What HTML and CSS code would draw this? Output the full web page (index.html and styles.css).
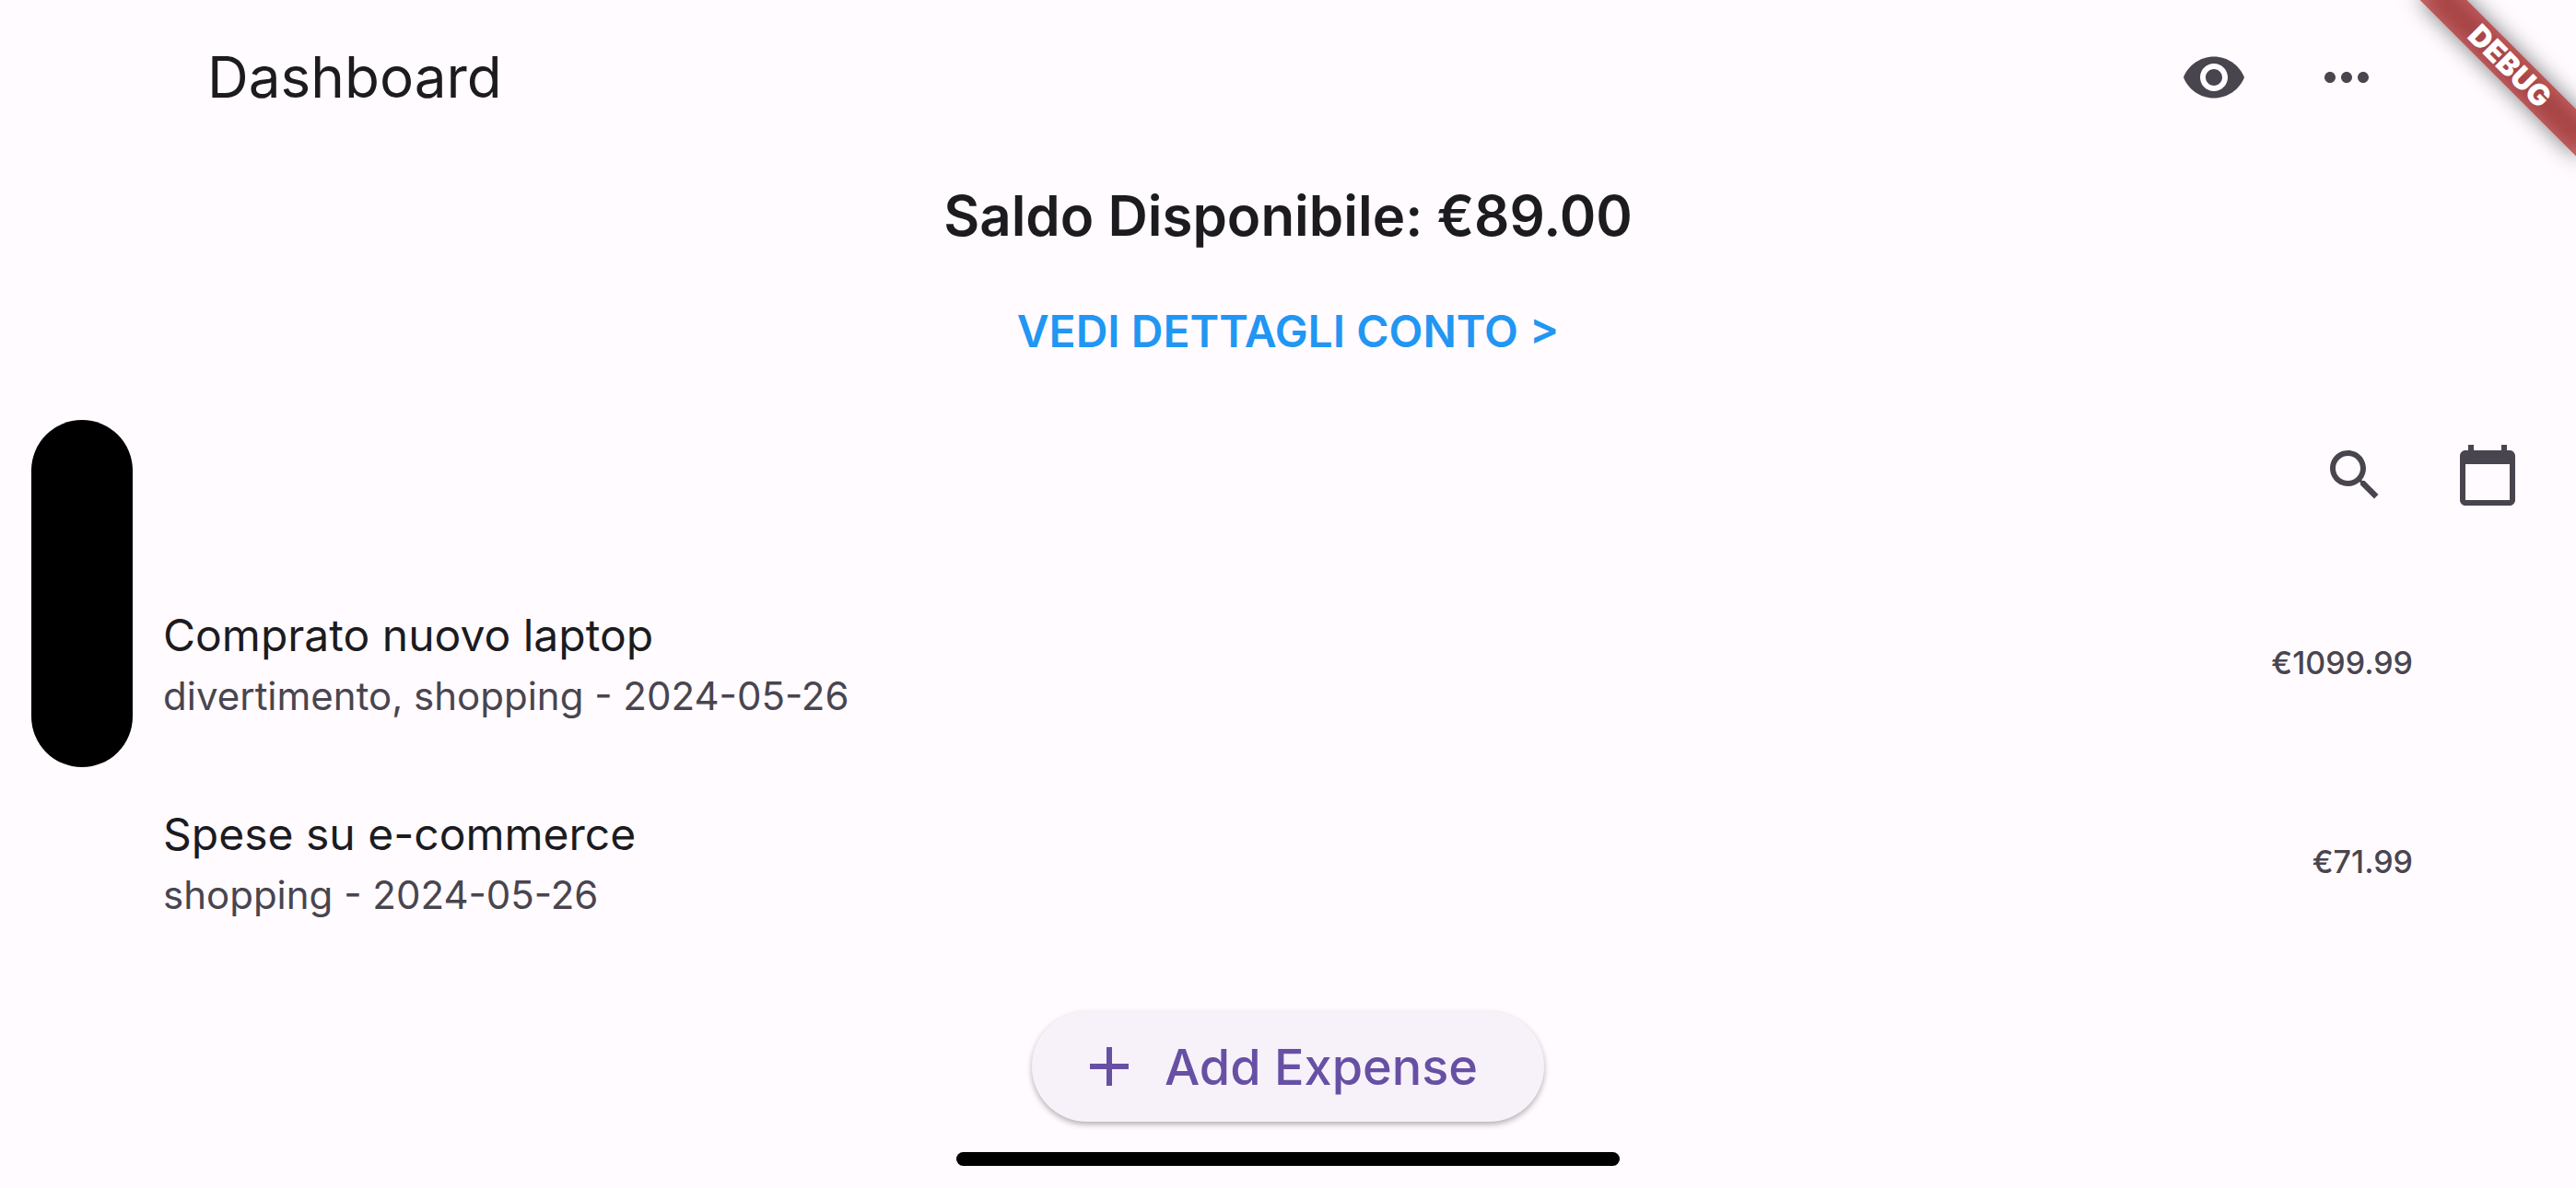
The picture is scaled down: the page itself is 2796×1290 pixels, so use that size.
FILE: index.html
```html
<!DOCTYPE html>
<html lang="it">
<head>
<meta charset="utf-8">
<meta name="viewport" content="width=device-width, initial-scale=1">
<title>Dashboard</title>
<link rel="stylesheet" href="styles.css">
</head>
<body>
<div class="screen">
  <header class="app-bar">
    <h1 class="app-title">Dashboard</h1>
    <button class="icon-button" type="button" aria-label="Mostra saldo">
      <svg class="icon" viewBox="0 0 24 24"><path d="M12 4.500C7 4.500 2.730 7.610 1 12c1.730 4.390 6 7.500 11 7.500s9.270-3.110 11-7.500c-1.730-4.390-6-7.500-11-7.500zM12 17c-2.760 0-5-2.240-5-5s2.240-5 5-5 5 2.240 5 5-2.240 5-5 5zm0-8c-1.660 0-3 1.340-3 3s1.340 3 3 3 3-1.340 3-3-1.340-3-3-3z"/></svg>
    </button>
    <button class="icon-button" type="button" aria-label="Altro">
      <svg class="icon" viewBox="0 0 24 24"><path d="M6 10c-1.100 0-2 .9-2 2s.9 2 2 2 2-.9 2-2-.9-2-2-2zm12 0c-1.100 0-2 .9-2 2s.9 2 2 2 2-.9 2-2-.9-2-2-2zm-6 0c-1.100 0-2 .9-2 2s.9 2 2 2 2-.9 2-2-.9-2-2-2z"/></svg>
    </button>
  </header>

  <main class="content">
    <section class="summary">
      <h2 class="balance">Saldo Disponibile: €89.00</h2>
      <a class="details-link" href="#conto">VEDI DETTAGLI CONTO &gt;</a>
    </section>

    <div class="filters">
      <button class="icon-button" type="button" aria-label="Cerca">
        <svg class="icon" viewBox="0 0 24 24"><path d="M15.500 14h-.79l-.28-.27C15.410 12.590 16 11.110 16 9.500 16 5.910 13.090 3 9.500 3S3 5.910 3 9.500 5.910 16 9.500 16c1.610 0 3.090-.59 4.230-1.570l.27.28v.79l5 4.990L20.490 19l-4.990-5zm-6 0C7.010 14 5 11.990 5 9.500S7.010 5 9.500 5 14 7.010 14 9.500 11.990 14 9.500 14z"/></svg>
      </button>
      <button class="icon-button" type="button" aria-label="Calendario">
        <svg class="icon" viewBox="0 0 24 24"><path d="M20 3h-1V1h-2v2H7V1H5v2H4c-1.100 0-2 .9-2 2v16c0 1.100.9 2 2 2h16c1.100 0 2-.9 2-2V5c0-1.100-.9-2-2-2zm0 18H4V8h16v13z"/></svg>
      </button>
    </div>

    <ul class="expenses">
      <li class="expense">
        <div class="expense-text">
          <p class="expense-title">Comprato nuovo laptop</p>
          <p class="expense-meta">divertimento, shopping - 2024-05-26</p>
        </div>
        <span class="amount">€1099.99</span>
      </li>
      <li class="expense">
        <div class="expense-text">
          <p class="expense-title">Spese su e-commerce</p>
          <p class="expense-meta">shopping - 2024-05-26</p>
        </div>
        <span class="amount">€71.99</span>
      </li>
    </ul>
  </main>

  <footer class="bottom">
    <button class="add-button" type="button">
      <svg class="icon" viewBox="0 0 24 24"><path d="M19 13h-6v6h-2v-6H5v-2h6V5h2v6h6v2z"/></svg>
      Add Expense
    </button>
    <div class="home-indicator"></div>
  </footer>

  <div class="island"></div>
  <div class="banner"><div class="ribbon"><span class="ribbon-text">DEBUG</span></div></div>
</div>
</body>
</html>
```
FILE: styles.css
```css
* {
  box-sizing: border-box;
}

body,
h1,
h2,
p,
ul {
  margin: 0;
  padding: 0;
}

body {
  background: #fffbff;
  color: #1c1b1f;
  font-family: Inter, "Liberation Sans", sans-serif;
}

button {
  border: 0;
  background: none;
  padding: 0;
  font: inherit;
  cursor: pointer;
}

.screen {
  position: relative;
  display: flex;
  flex-direction: column;
  min-height: 100vh;
}

.icon {
  display: block;
  width: 72px;
  height: 72px;
  fill: currentColor;
}

.icon-button {
  display: grid;
  place-items: center;
  width: 144px;
  height: 144px;
  color: #49454f;
}

/* Top bar */

.app-bar {
  display: flex;
  align-items: center;
  height: 168px;
  padding: 0 177px 0 225px;
}

.app-title {
  flex: 1;
  font-size: 62px;
  font-weight: 400;
  line-height: 84px;
}

/* Balance */

.summary {
  display: flex;
  flex-direction: column;
  align-items: center;
  gap: 48px;
  padding-top: 24px;
}

.balance {
  font-size: 60px;
  font-weight: 600;
  line-height: 84px;
}

.details-link {
  color: #2196f3;
  font-size: 48px;
  font-weight: 600;
  line-height: 72px;
  text-decoration: none;
}

.filters {
  display: flex;
  justify-content: flex-end;
  padding: 48px 24px 24px;
}

/* Expense list */

.expenses {
  list-style: none;
  padding: 0 177px;
}

.expense {
  display: flex;
  align-items: center;
  justify-content: space-between;
  min-height: 216px;
}

.expense-title {
  font-size: 48px;
  line-height: 72px;
}

.expense-meta {
  color: #49454f;
  font-size: 42px;
  line-height: 60px;
}

.amount {
  color: #49454f;
  font-size: 34px;
  font-weight: 500;
  line-height: 48px;
}

/* Bottom action */

.bottom {
  display: flex;
  flex-direction: column;
  align-items: center;
  gap: 33px;
  margin-top: auto;
  padding: 24px 0;
}

.add-button {
  display: flex;
  align-items: center;
  gap: 24px;
  height: 120px;
  padding: 0 72px 0 48px;
  border-radius: 60px;
  background: #f7f2fa;
  box-shadow: 0 3px 6px rgba(0, 0, 0, 0.3);
  color: #6750a4;
  font-size: 54px;
  font-weight: 500;
}

.home-indicator {
  width: 720px;
  max-width: 60%;
  height: 15px;
  border-radius: 8px;
  background: #000;
}

/* Device overlays */

.island {
  position: absolute;
  top: 456px;
  left: 34px;
  width: 110px;
  height: 377px;
  border-radius: 55px;
  background: #000;
}

.banner {
  position: absolute;
  top: 0;
  right: 0;
  width: 240px;
  height: 240px;
  overflow: hidden;
  pointer-events: none;
}

.ribbon {
  position: absolute;
  top: 54px;
  right: -48px;
  width: 240px;
  height: 36px;
  transform: rotate(45deg);
}

.ribbon::before {
  content: "";
  position: absolute;
  inset: 0;
  background: rgba(0, 0, 0, 0.5);
  filter: blur(12px);
}

.ribbon-text {
  position: absolute;
  inset: 0;
  background: rgba(183, 28, 28, 0.63);
  color: #fff;
  font-size: 32px;
  font-weight: 900;
  line-height: 36px;
  text-align: center;
}
```
